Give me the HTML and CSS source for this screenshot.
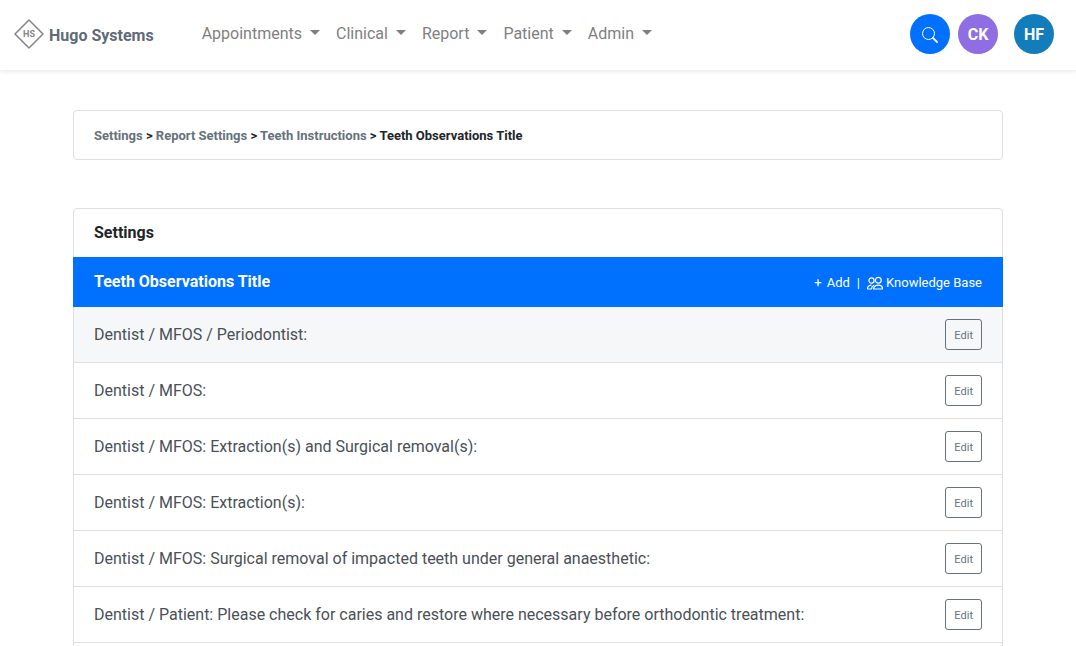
FILE: index.html
```html
<!DOCTYPE html>
<html lang="en">
<head>
    <meta charset="UTF-8">
    <meta name="viewport" content="width=device-width, initial-scale=1.0">
    <title>Teeth Observations Title - Hugo Systems</title>
    <link rel="stylesheet" href="styles.css">
</head>
<body>
    <header class="navbar">
        <a class="brand" href="#">
            <svg class="logo" viewBox="0 0 30 30" aria-hidden="true">
                <path d="M15 1 L29 15 L15 29 L1 15 Z" fill="none" stroke="#858585" stroke-width="1.5" stroke-linejoin="round"/>
                <text x="15" y="18" text-anchor="middle">HS</text>
            </svg>
            <span>Hugo Systems</span>
        </a>
        <nav class="menu">
            <button type="button" class="menu-item">Appointments</button>
            <button type="button" class="menu-item">Clinical</button>
            <button type="button" class="menu-item">Report</button>
            <button type="button" class="menu-item">Patient</button>
            <button type="button" class="menu-item">Admin</button>
        </nav>
        <div class="actions">
            <button type="button" class="circle search" aria-label="Search">
                <svg width="16" height="16" viewBox="0 0 16 16" fill="none" stroke="#fff" aria-hidden="true">
                    <circle cx="6.5" cy="6.5" r="6"/>
                    <path d="M11 11 L15 15" stroke-width="1.8" stroke-linecap="round"/>
                </svg>
            </button>
            <button type="button" class="circle clinic">CK</button>
            <button type="button" class="circle user">HF</button>
        </div>
    </header>

    <main class="container">
        <nav class="card breadcrumb">
            <a href="#">Settings</a> &gt; <a href="#">Report Settings</a> &gt; <a href="#">Teeth Instructions</a> &gt; Teeth Observations Title
        </nav>

        <section class="card">
            <h1 class="card-title">Settings</h1>
            <div class="list-header">
                <h2>Teeth Observations Title</h2>
                <div class="links">
                    <a href="#"><span class="plus">+</span>Add</a>
                    <span>|</span>
                    <a href="#">
                        <svg width="16" height="16" viewBox="0 0 16 16" fill="none" stroke="#fff" stroke-width="1.2" aria-hidden="true">
                            <circle cx="4.5" cy="5.5" r="2.6"/>
                            <circle cx="11.3" cy="5.2" r="2.9"/>
                            <path d="M6.6 14 H15.5 C15.5 11.6 14 10.2 11.2 10.2 C8.4 10.2 6.6 11.6 6.6 14 Z M4.8 14 H0.5 C0.5 11.8 1.8 10.3 4.5 10.2 M4.5 14 C4.5 12.2 5.6 10.9 7 10.2"/>
                        </svg>
                        Knowledge Base
                    </a>
                </div>
            </div>
            <ul class="list">
                <li class="active">
                    <span>Dentist / MFOS / Periodontist:</span>
                    <button type="button" class="edit">Edit</button>
                </li>
                <li>
                    <span>Dentist / MFOS:</span>
                    <button type="button" class="edit">Edit</button>
                </li>
                <li>
                    <span>Dentist / MFOS: Extraction(s) and Surgical removal(s):</span>
                    <button type="button" class="edit">Edit</button>
                </li>
                <li>
                    <span>Dentist / MFOS: Extraction(s):</span>
                    <button type="button" class="edit">Edit</button>
                </li>
                <li>
                    <span>Dentist / MFOS: Surgical removal of impacted teeth under general anaesthetic:</span>
                    <button type="button" class="edit">Edit</button>
                </li>
                <li>
                    <span>Dentist / Patient: Please check for caries and restore where necessary before orthodontic treatment:</span>
                    <button type="button" class="edit">Edit</button>
                </li>
                <li></li>
            </ul>
        </section>
    </main>
</body>
</html>
```

FILE: styles.css
```css
* { box-sizing: border-box; }
body { margin: 0; background: #fff; color: #212529; font-family: Roboto, "Liberation Sans", sans-serif; font-size: 16px; line-height: 24px; }
a { color: inherit; text-decoration: none; }
button { font-family: inherit; cursor: pointer; }
h1, h2 { margin: 0; font-size: 16px; line-height: 24px; font-weight: 700; }

.navbar { display: flex; align-items: center; height: 70px; padding: 0 22px 2px 14px; background: #fff; box-shadow: 0 2px 4px rgba(0, 0, 0, 0.08); }
.brand { display: flex; align-items: center; gap: 5px; color: #5f6b76; font-weight: 700; }
.brand span { padding-top: 3px; }
.logo { width: 30px; height: 30px; }
.logo text { font-size: 9px; font-weight: 700; fill: #858585; }
.menu { display: flex; gap: 16px; margin-left: 48px; }
.menu-item { display: flex; align-items: center; gap: 8px; padding: 0; border: 0; background: none; color: #7f7f7f; font-size: 16px; line-height: 24px; }
.menu-item::after { content: ""; margin-bottom: 4px; border-top: 5px solid #7f7f7f; border-left: 5px solid transparent; border-right: 5px solid transparent; }
.actions { display: flex; gap: 8px; margin-left: auto; }
.circle { display: flex; align-items: center; justify-content: center; width: 40px; height: 40px; padding: 0; border: 0; border-radius: 50%; color: #fff; font-size: 16px; font-weight: 700; }
.search { padding: 2px 0 0; background: #0070ff; }
.clinic { background: #8f6de3; }
.user { margin-left: 8px; background: #127dba; }

.container { padding: 40px 73px 0; }
.card { border: 1px solid #dfdfdf; border-radius: 4px; margin-bottom: 48px; }
.breadcrumb { padding: 13px 20px 11px; font-size: 13px; font-weight: 700; }
.breadcrumb a { color: #66717b; }
.card-title { padding: 12px 20px; }
.list-header { display: flex; align-items: center; justify-content: space-between; margin: 0 -1px; padding: 12px 21px; background: #0070ff; color: #fff; }
.links { display: flex; align-items: center; gap: 7px; padding-top: 2px; font-size: 13px; }
.links a { display: flex; align-items: center; gap: 3px; }
.plus { margin-right: 2px; }
.list { margin: 0; padding: 0; list-style: none; color: #495057; }
.list li { display: flex; align-items: center; justify-content: space-between; min-height: 56px; padding: 12px 20px; border-bottom: 1px solid #dfdfdf; }
.list .active { background: #f6f7f9; }
.edit { padding: 8px 8px 6px; border: 1px solid #66717b; border-radius: 3px; background: transparent; color: #66717b; font-size: 11px; line-height: 15px; }
```
